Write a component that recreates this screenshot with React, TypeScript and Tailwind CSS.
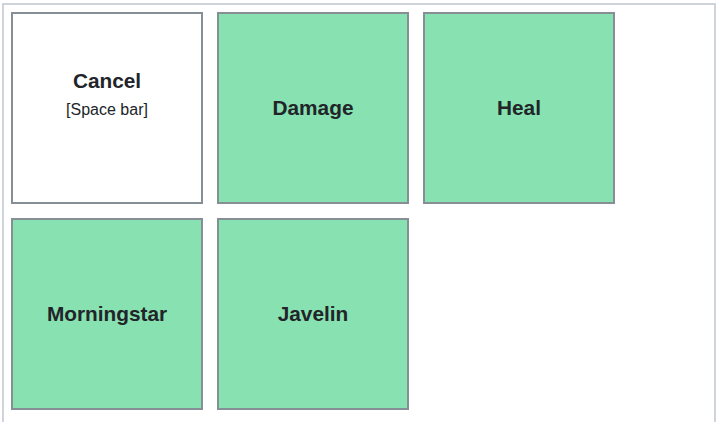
import React from "react";

const tiles = [
  { title: "Cancel", sub: "[Space bar]", green: false },
  { title: "Damage", green: true },
  { title: "Heal", green: true },
  { title: "Morningstar", green: true },
  { title: "Javelin", green: true },
];

export default function App() {
  return (
    <div className="w-[718px] h-[422px] overflow-hidden bg-white" style={{ fontFamily: '"Liberation Sans", Arial, sans-serif' }}>
      <div className="ml-[2px] mt-[3px] w-[714px] h-[430px] border-2 border-[#ced4da] flex flex-wrap content-start">
        {tiles.map((t) => (
          <div
            key={t.title}
            className={`m-[7px] w-[192px] h-[192px] border-2 border-[#868e96] flex flex-col items-center justify-center text-[#212529] ${t.green ? "bg-[#88e1b0]" : "bg-white"}`}
          >
            <div className="text-[20.8px] font-bold leading-[28px]">{t.title}</div>
            {t.sub && (
              <>
                <div className="mt-[1px] text-[16px] leading-[28px]">{t.sub}</div>
                <div className="h-[25px]" />
              </>
            )}
          </div>
        ))}
      </div>
    </div>
  );
}
